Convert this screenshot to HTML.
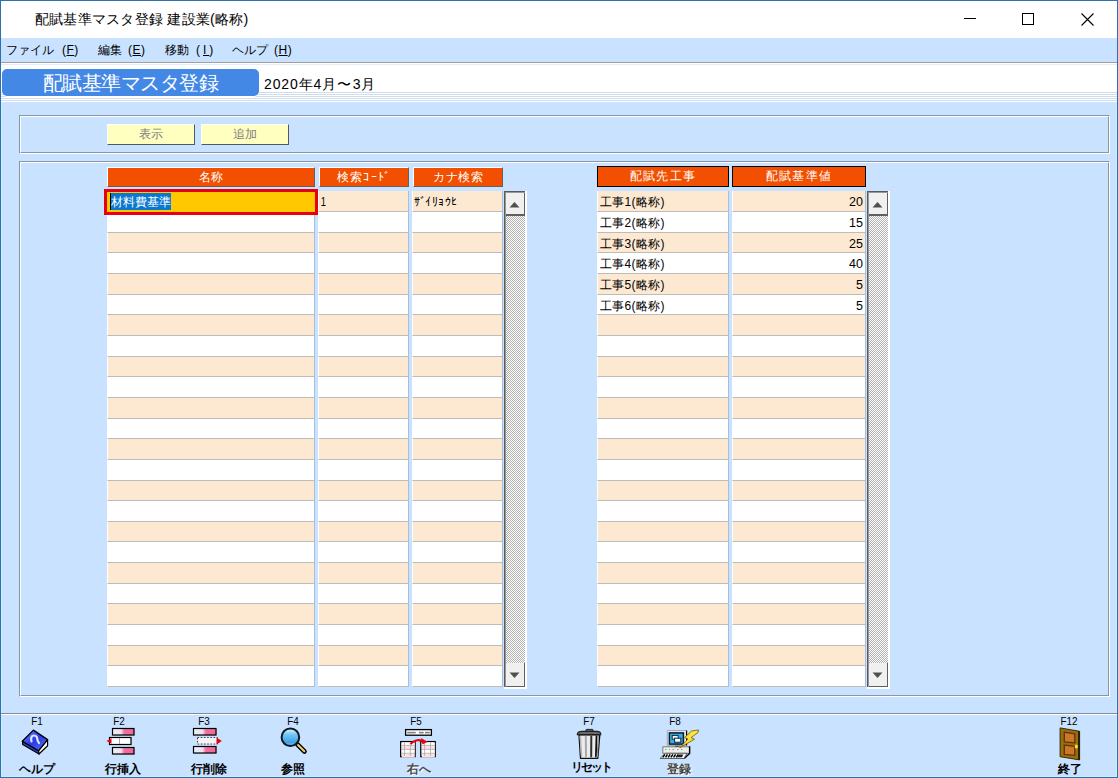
<!DOCTYPE html><html lang="ja"><head><meta charset="utf-8"><style>
*{margin:0;padding:0;box-sizing:border-box}
html,body{width:1118px;height:778px;overflow:hidden;background:#c8e2ff;font-family:"Liberation Sans",sans-serif}
div{position:absolute}
.t{white-space:nowrap;line-height:1}
</style></head><body><div style="left:0px;top:0px;width:1118px;height:778px;border:1px solid #2d6fb0;background:#c8e2ff"></div>
<div style="left:1px;top:1px;width:1116px;height:776px;border-left:1px solid #cdf0ff;border-right:1px solid #cdf0ff;border-bottom:1px solid #cdf0ff"></div>
<div style="left:1px;top:1px;width:1116px;height:37px;background:#fff"></div>
<div class="t" style="left:35px;top:12px;font-size:14.3px;color:#000;letter-spacing:0.23px">配賦基準マスタ登録 建設業(略称)</div>
<div style="left:964px;top:18px;width:12px;height:1px;background:#000"></div>
<div style="left:1022px;top:13px;width:12px;height:12px;border:1px solid #000"></div>
<svg style="position:absolute;left:1081px;top:13px" width="13" height="13"><path d="M0.5 0.5L12.5 12.5M12.5 0.5L0.5 12.5" stroke="#000" stroke-width="1.1"/></svg>
<div style="left:1px;top:38px;width:1116px;height:24px;background:#c8e2ff"></div>
<div style="left:1px;top:62px;width:1116px;height:1px;background:#a0a0a0"></div>
<div style="left:1px;top:63px;width:1116px;height:39px;background:#fff"></div>
<div style="left:1px;top:64px;width:1116px;height:1px;background:#e4ecf4"></div>
<div style="left:1px;top:92px;width:1116px;height:1px;background:#cfdceb"></div>
<div style="left:1px;top:94px;width:1116px;height:1px;background:#cfdceb"></div>
<div style="left:1px;top:96px;width:1116px;height:1px;background:#cfdceb"></div>
<div style="left:1px;top:98px;width:1116px;height:1px;background:#cfdceb"></div>
<div style="left:1px;top:100px;width:1116px;height:1px;background:#cfdceb"></div>
<div class="t" style="left:6px;top:44px;font-size:12px;color:#000">ファイル</div>
<div class="t" style="left:62px;top:44px;font-size:12px;color:#000;letter-spacing:0.5px">(<u>F</u>)</div>
<div class="t" style="left:98px;top:44px;font-size:12px;color:#000">編集</div>
<div class="t" style="left:128px;top:44px;font-size:12px;color:#000;letter-spacing:0.5px">(<u>E</u>)</div>
<div class="t" style="left:165px;top:44px;font-size:12px;color:#000">移動</div>
<div class="t" style="left:196px;top:44px;font-size:12px;color:#000;letter-spacing:3px">(<u>I</u>)</div>
<div class="t" style="left:232px;top:44px;font-size:12px;color:#000">ヘルプ</div>
<div class="t" style="left:274px;top:44px;font-size:12px;color:#000;letter-spacing:0.5px">(<u>H</u>)</div>
<div style="left:2px;top:69px;width:257px;height:27px;background:#4488e6;border-radius:5px;box-shadow:0 1px 0 #fff"></div>
<div class="t" style="left:42.5px;top:73px;font-size:20px;color:#fff;letter-spacing:-0.45px">配賦基準マスタ登録</div>
<div class="t" style="left:264px;top:77px;font-size:14px;color:#000;letter-spacing:0.85px">2020年4月<span style="display:inline-block;transform:scaleX(1.0);margin:0 0.5px">〜</span>3月</div>
<div style="left:19px;top:115px;width:1091px;height:39px;border-top:1px solid #8a96a4;border-left:1px solid #8a96a4;border-right:1px solid #fff;border-bottom:1px solid #fff"></div>
<div style="left:20px;top:116px;width:1089px;height:37px;border-top:1px solid #fff;border-left:1px solid #fff;border-right:1px solid #8a96a4;border-bottom:1px solid #8a96a4"></div>
<div style="left:19px;top:161px;width:1091px;height:536px;border-top:1px solid #8a96a4;border-left:1px solid #8a96a4;border-right:1px solid #fff;border-bottom:1px solid #fff"></div>
<div style="left:20px;top:162px;width:1089px;height:534px;border-top:1px solid #fff;border-left:1px solid #fff;border-right:1px solid #8a96a4;border-bottom:1px solid #8a96a4"></div>
<div style="left:107px;top:124px;width:88px;height:21px;background:#ffffc0;border-top:1px solid #fff;border-left:1px solid #fff;border-right:1px solid #505860;border-bottom:1px solid #505860;font-size:12px;color:#808080;text-align:center;line-height:19px">表示</div>
<div style="left:201px;top:124px;width:88px;height:21px;background:#ffffc0;border-top:1px solid #fff;border-left:1px solid #fff;border-right:1px solid #505860;border-bottom:1px solid #505860;font-size:12px;color:#808080;text-align:center;line-height:19px">追加</div>
<div style="left:107px;width:208px;top:167px;height:20px;background:#f25000;border-top:1px solid #fff;border-left:1px solid #fff;border-right:1px solid #6a6058;border-bottom:1px solid #6a6058;font-size:12px;color:#fff;text-align:center;line-height:18px;letter-spacing:0px">名称</div>
<div style="left:319px;width:90px;top:167px;height:20px;background:#f25000;border-top:1px solid #fff;border-left:1px solid #fff;border-right:1px solid #6a6058;border-bottom:1px solid #6a6058;font-size:12px;color:#fff;text-align:center;line-height:18px;letter-spacing:1.2px">検索ｺｰﾄﾞ</div>
<div style="left:413px;width:90px;top:167px;height:20px;background:#f25000;border-top:1px solid #fff;border-left:1px solid #fff;border-right:1px solid #6a6058;border-bottom:1px solid #6a6058;font-size:12px;color:#fff;text-align:center;line-height:18px;letter-spacing:0.5px">カナ検索</div>
<div style="left:597px;width:132px;top:166px;height:21px;background:#f25000;border:1px solid #000;font-size:12px;color:#fff;text-align:center;line-height:19px;letter-spacing:1.2px">配賦先工事</div>
<div style="left:732px;width:134px;top:166px;height:21px;background:#f25000;border:1px solid #000;font-size:12px;color:#fff;text-align:center;line-height:19px;letter-spacing:1.2px">配賦基準値</div>
<div style="left:314px;top:191px;width:1px;height:496px;background:#a9bfd6"></div>
<div style="left:408px;top:191px;width:1px;height:496px;background:#a9bfd6"></div>
<div style="left:502px;top:191px;width:1px;height:496px;background:#a9bfd6"></div>
<div style="left:728px;top:191px;width:1px;height:496px;background:#a9bfd6"></div>
<div style="left:865px;top:191px;width:1px;height:496px;background:#a9bfd6"></div>
<div style="left:107px;top:191px;width:207px;height:21px;background:#fde9d2;border-bottom:1px solid #bebcb8;border-left:1px solid #fff"></div>
<div style="left:318px;top:191px;width:90px;height:21px;background:#fde9d2;border-bottom:1px solid #bebcb8;border-left:1px solid #fff"></div>
<div style="left:412px;top:191px;width:90px;height:21px;background:#fde9d2;border-bottom:1px solid #bebcb8;border-left:1px solid #fff"></div>
<div style="left:597px;top:191px;width:131px;height:21px;background:#fde9d2;border-bottom:1px solid #bebcb8;border-left:1px solid #fff"></div>
<div class="t" style="left:600px;top:196px;font-size:12px;color:#000;letter-spacing:0.3px">工事1(略称)</div>
<div style="left:732px;top:191px;width:133px;height:21px;background:#fde9d2;border-bottom:1px solid #bebcb8;border-left:1px solid #fff"></div>
<div class="t" style="left:732px;width:131px;top:196px;font-size:12.5px;color:#000;text-align:right">20</div>
<div style="left:107px;top:212px;width:207px;height:21px;background:#ffffff;border-bottom:1px solid #bebcb8;border-left:1px solid #fff"></div>
<div style="left:318px;top:212px;width:90px;height:21px;background:#ffffff;border-bottom:1px solid #bebcb8;border-left:1px solid #fff"></div>
<div style="left:412px;top:212px;width:90px;height:21px;background:#ffffff;border-bottom:1px solid #bebcb8;border-left:1px solid #fff"></div>
<div style="left:597px;top:212px;width:131px;height:21px;background:#ffffff;border-bottom:1px solid #bebcb8;border-left:1px solid #fff"></div>
<div class="t" style="left:600px;top:217px;font-size:12px;color:#000;letter-spacing:0.3px">工事2(略称)</div>
<div style="left:732px;top:212px;width:133px;height:21px;background:#ffffff;border-bottom:1px solid #bebcb8;border-left:1px solid #fff"></div>
<div class="t" style="left:732px;width:131px;top:217px;font-size:12.5px;color:#000;text-align:right">15</div>
<div style="left:107px;top:233px;width:207px;height:20px;background:#fde9d2;border-bottom:1px solid #bebcb8;border-left:1px solid #fff"></div>
<div style="left:318px;top:233px;width:90px;height:20px;background:#fde9d2;border-bottom:1px solid #bebcb8;border-left:1px solid #fff"></div>
<div style="left:412px;top:233px;width:90px;height:20px;background:#fde9d2;border-bottom:1px solid #bebcb8;border-left:1px solid #fff"></div>
<div style="left:597px;top:233px;width:131px;height:20px;background:#fde9d2;border-bottom:1px solid #bebcb8;border-left:1px solid #fff"></div>
<div class="t" style="left:600px;top:238px;font-size:12px;color:#000;letter-spacing:0.3px">工事3(略称)</div>
<div style="left:732px;top:233px;width:133px;height:20px;background:#fde9d2;border-bottom:1px solid #bebcb8;border-left:1px solid #fff"></div>
<div class="t" style="left:732px;width:131px;top:238px;font-size:12.5px;color:#000;text-align:right">25</div>
<div style="left:107px;top:253px;width:207px;height:21px;background:#ffffff;border-bottom:1px solid #bebcb8;border-left:1px solid #fff"></div>
<div style="left:318px;top:253px;width:90px;height:21px;background:#ffffff;border-bottom:1px solid #bebcb8;border-left:1px solid #fff"></div>
<div style="left:412px;top:253px;width:90px;height:21px;background:#ffffff;border-bottom:1px solid #bebcb8;border-left:1px solid #fff"></div>
<div style="left:597px;top:253px;width:131px;height:21px;background:#ffffff;border-bottom:1px solid #bebcb8;border-left:1px solid #fff"></div>
<div class="t" style="left:600px;top:258px;font-size:12px;color:#000;letter-spacing:0.3px">工事4(略称)</div>
<div style="left:732px;top:253px;width:133px;height:21px;background:#ffffff;border-bottom:1px solid #bebcb8;border-left:1px solid #fff"></div>
<div class="t" style="left:732px;width:131px;top:258px;font-size:12.5px;color:#000;text-align:right">40</div>
<div style="left:107px;top:274px;width:207px;height:21px;background:#fde9d2;border-bottom:1px solid #bebcb8;border-left:1px solid #fff"></div>
<div style="left:318px;top:274px;width:90px;height:21px;background:#fde9d2;border-bottom:1px solid #bebcb8;border-left:1px solid #fff"></div>
<div style="left:412px;top:274px;width:90px;height:21px;background:#fde9d2;border-bottom:1px solid #bebcb8;border-left:1px solid #fff"></div>
<div style="left:597px;top:274px;width:131px;height:21px;background:#fde9d2;border-bottom:1px solid #bebcb8;border-left:1px solid #fff"></div>
<div class="t" style="left:600px;top:279px;font-size:12px;color:#000;letter-spacing:0.3px">工事5(略称)</div>
<div style="left:732px;top:274px;width:133px;height:21px;background:#fde9d2;border-bottom:1px solid #bebcb8;border-left:1px solid #fff"></div>
<div class="t" style="left:732px;width:131px;top:279px;font-size:12.5px;color:#000;text-align:right">5</div>
<div style="left:107px;top:295px;width:207px;height:20px;background:#ffffff;border-bottom:1px solid #bebcb8;border-left:1px solid #fff"></div>
<div style="left:318px;top:295px;width:90px;height:20px;background:#ffffff;border-bottom:1px solid #bebcb8;border-left:1px solid #fff"></div>
<div style="left:412px;top:295px;width:90px;height:20px;background:#ffffff;border-bottom:1px solid #bebcb8;border-left:1px solid #fff"></div>
<div style="left:597px;top:295px;width:131px;height:20px;background:#ffffff;border-bottom:1px solid #bebcb8;border-left:1px solid #fff"></div>
<div class="t" style="left:600px;top:300px;font-size:12px;color:#000;letter-spacing:0.3px">工事6(略称)</div>
<div style="left:732px;top:295px;width:133px;height:20px;background:#ffffff;border-bottom:1px solid #bebcb8;border-left:1px solid #fff"></div>
<div class="t" style="left:732px;width:131px;top:300px;font-size:12.5px;color:#000;text-align:right">5</div>
<div style="left:107px;top:315px;width:207px;height:21px;background:#fde9d2;border-bottom:1px solid #bebcb8;border-left:1px solid #fff"></div>
<div style="left:318px;top:315px;width:90px;height:21px;background:#fde9d2;border-bottom:1px solid #bebcb8;border-left:1px solid #fff"></div>
<div style="left:412px;top:315px;width:90px;height:21px;background:#fde9d2;border-bottom:1px solid #bebcb8;border-left:1px solid #fff"></div>
<div style="left:597px;top:315px;width:131px;height:21px;background:#fde9d2;border-bottom:1px solid #bebcb8;border-left:1px solid #fff"></div>
<div style="left:732px;top:315px;width:133px;height:21px;background:#fde9d2;border-bottom:1px solid #bebcb8;border-left:1px solid #fff"></div>
<div style="left:107px;top:336px;width:207px;height:21px;background:#ffffff;border-bottom:1px solid #bebcb8;border-left:1px solid #fff"></div>
<div style="left:318px;top:336px;width:90px;height:21px;background:#ffffff;border-bottom:1px solid #bebcb8;border-left:1px solid #fff"></div>
<div style="left:412px;top:336px;width:90px;height:21px;background:#ffffff;border-bottom:1px solid #bebcb8;border-left:1px solid #fff"></div>
<div style="left:597px;top:336px;width:131px;height:21px;background:#ffffff;border-bottom:1px solid #bebcb8;border-left:1px solid #fff"></div>
<div style="left:732px;top:336px;width:133px;height:21px;background:#ffffff;border-bottom:1px solid #bebcb8;border-left:1px solid #fff"></div>
<div style="left:107px;top:357px;width:207px;height:20px;background:#fde9d2;border-bottom:1px solid #bebcb8;border-left:1px solid #fff"></div>
<div style="left:318px;top:357px;width:90px;height:20px;background:#fde9d2;border-bottom:1px solid #bebcb8;border-left:1px solid #fff"></div>
<div style="left:412px;top:357px;width:90px;height:20px;background:#fde9d2;border-bottom:1px solid #bebcb8;border-left:1px solid #fff"></div>
<div style="left:597px;top:357px;width:131px;height:20px;background:#fde9d2;border-bottom:1px solid #bebcb8;border-left:1px solid #fff"></div>
<div style="left:732px;top:357px;width:133px;height:20px;background:#fde9d2;border-bottom:1px solid #bebcb8;border-left:1px solid #fff"></div>
<div style="left:107px;top:377px;width:207px;height:21px;background:#ffffff;border-bottom:1px solid #bebcb8;border-left:1px solid #fff"></div>
<div style="left:318px;top:377px;width:90px;height:21px;background:#ffffff;border-bottom:1px solid #bebcb8;border-left:1px solid #fff"></div>
<div style="left:412px;top:377px;width:90px;height:21px;background:#ffffff;border-bottom:1px solid #bebcb8;border-left:1px solid #fff"></div>
<div style="left:597px;top:377px;width:131px;height:21px;background:#ffffff;border-bottom:1px solid #bebcb8;border-left:1px solid #fff"></div>
<div style="left:732px;top:377px;width:133px;height:21px;background:#ffffff;border-bottom:1px solid #bebcb8;border-left:1px solid #fff"></div>
<div style="left:107px;top:398px;width:207px;height:21px;background:#fde9d2;border-bottom:1px solid #bebcb8;border-left:1px solid #fff"></div>
<div style="left:318px;top:398px;width:90px;height:21px;background:#fde9d2;border-bottom:1px solid #bebcb8;border-left:1px solid #fff"></div>
<div style="left:412px;top:398px;width:90px;height:21px;background:#fde9d2;border-bottom:1px solid #bebcb8;border-left:1px solid #fff"></div>
<div style="left:597px;top:398px;width:131px;height:21px;background:#fde9d2;border-bottom:1px solid #bebcb8;border-left:1px solid #fff"></div>
<div style="left:732px;top:398px;width:133px;height:21px;background:#fde9d2;border-bottom:1px solid #bebcb8;border-left:1px solid #fff"></div>
<div style="left:107px;top:419px;width:207px;height:20px;background:#ffffff;border-bottom:1px solid #bebcb8;border-left:1px solid #fff"></div>
<div style="left:318px;top:419px;width:90px;height:20px;background:#ffffff;border-bottom:1px solid #bebcb8;border-left:1px solid #fff"></div>
<div style="left:412px;top:419px;width:90px;height:20px;background:#ffffff;border-bottom:1px solid #bebcb8;border-left:1px solid #fff"></div>
<div style="left:597px;top:419px;width:131px;height:20px;background:#ffffff;border-bottom:1px solid #bebcb8;border-left:1px solid #fff"></div>
<div style="left:732px;top:419px;width:133px;height:20px;background:#ffffff;border-bottom:1px solid #bebcb8;border-left:1px solid #fff"></div>
<div style="left:107px;top:439px;width:207px;height:21px;background:#fde9d2;border-bottom:1px solid #bebcb8;border-left:1px solid #fff"></div>
<div style="left:318px;top:439px;width:90px;height:21px;background:#fde9d2;border-bottom:1px solid #bebcb8;border-left:1px solid #fff"></div>
<div style="left:412px;top:439px;width:90px;height:21px;background:#fde9d2;border-bottom:1px solid #bebcb8;border-left:1px solid #fff"></div>
<div style="left:597px;top:439px;width:131px;height:21px;background:#fde9d2;border-bottom:1px solid #bebcb8;border-left:1px solid #fff"></div>
<div style="left:732px;top:439px;width:133px;height:21px;background:#fde9d2;border-bottom:1px solid #bebcb8;border-left:1px solid #fff"></div>
<div style="left:107px;top:460px;width:207px;height:21px;background:#ffffff;border-bottom:1px solid #bebcb8;border-left:1px solid #fff"></div>
<div style="left:318px;top:460px;width:90px;height:21px;background:#ffffff;border-bottom:1px solid #bebcb8;border-left:1px solid #fff"></div>
<div style="left:412px;top:460px;width:90px;height:21px;background:#ffffff;border-bottom:1px solid #bebcb8;border-left:1px solid #fff"></div>
<div style="left:597px;top:460px;width:131px;height:21px;background:#ffffff;border-bottom:1px solid #bebcb8;border-left:1px solid #fff"></div>
<div style="left:732px;top:460px;width:133px;height:21px;background:#ffffff;border-bottom:1px solid #bebcb8;border-left:1px solid #fff"></div>
<div style="left:107px;top:481px;width:207px;height:20px;background:#fde9d2;border-bottom:1px solid #bebcb8;border-left:1px solid #fff"></div>
<div style="left:318px;top:481px;width:90px;height:20px;background:#fde9d2;border-bottom:1px solid #bebcb8;border-left:1px solid #fff"></div>
<div style="left:412px;top:481px;width:90px;height:20px;background:#fde9d2;border-bottom:1px solid #bebcb8;border-left:1px solid #fff"></div>
<div style="left:597px;top:481px;width:131px;height:20px;background:#fde9d2;border-bottom:1px solid #bebcb8;border-left:1px solid #fff"></div>
<div style="left:732px;top:481px;width:133px;height:20px;background:#fde9d2;border-bottom:1px solid #bebcb8;border-left:1px solid #fff"></div>
<div style="left:107px;top:501px;width:207px;height:21px;background:#ffffff;border-bottom:1px solid #bebcb8;border-left:1px solid #fff"></div>
<div style="left:318px;top:501px;width:90px;height:21px;background:#ffffff;border-bottom:1px solid #bebcb8;border-left:1px solid #fff"></div>
<div style="left:412px;top:501px;width:90px;height:21px;background:#ffffff;border-bottom:1px solid #bebcb8;border-left:1px solid #fff"></div>
<div style="left:597px;top:501px;width:131px;height:21px;background:#ffffff;border-bottom:1px solid #bebcb8;border-left:1px solid #fff"></div>
<div style="left:732px;top:501px;width:133px;height:21px;background:#ffffff;border-bottom:1px solid #bebcb8;border-left:1px solid #fff"></div>
<div style="left:107px;top:522px;width:207px;height:20px;background:#fde9d2;border-bottom:1px solid #bebcb8;border-left:1px solid #fff"></div>
<div style="left:318px;top:522px;width:90px;height:20px;background:#fde9d2;border-bottom:1px solid #bebcb8;border-left:1px solid #fff"></div>
<div style="left:412px;top:522px;width:90px;height:20px;background:#fde9d2;border-bottom:1px solid #bebcb8;border-left:1px solid #fff"></div>
<div style="left:597px;top:522px;width:131px;height:20px;background:#fde9d2;border-bottom:1px solid #bebcb8;border-left:1px solid #fff"></div>
<div style="left:732px;top:522px;width:133px;height:20px;background:#fde9d2;border-bottom:1px solid #bebcb8;border-left:1px solid #fff"></div>
<div style="left:107px;top:542px;width:207px;height:21px;background:#ffffff;border-bottom:1px solid #bebcb8;border-left:1px solid #fff"></div>
<div style="left:318px;top:542px;width:90px;height:21px;background:#ffffff;border-bottom:1px solid #bebcb8;border-left:1px solid #fff"></div>
<div style="left:412px;top:542px;width:90px;height:21px;background:#ffffff;border-bottom:1px solid #bebcb8;border-left:1px solid #fff"></div>
<div style="left:597px;top:542px;width:131px;height:21px;background:#ffffff;border-bottom:1px solid #bebcb8;border-left:1px solid #fff"></div>
<div style="left:732px;top:542px;width:133px;height:21px;background:#ffffff;border-bottom:1px solid #bebcb8;border-left:1px solid #fff"></div>
<div style="left:107px;top:563px;width:207px;height:21px;background:#fde9d2;border-bottom:1px solid #bebcb8;border-left:1px solid #fff"></div>
<div style="left:318px;top:563px;width:90px;height:21px;background:#fde9d2;border-bottom:1px solid #bebcb8;border-left:1px solid #fff"></div>
<div style="left:412px;top:563px;width:90px;height:21px;background:#fde9d2;border-bottom:1px solid #bebcb8;border-left:1px solid #fff"></div>
<div style="left:597px;top:563px;width:131px;height:21px;background:#fde9d2;border-bottom:1px solid #bebcb8;border-left:1px solid #fff"></div>
<div style="left:732px;top:563px;width:133px;height:21px;background:#fde9d2;border-bottom:1px solid #bebcb8;border-left:1px solid #fff"></div>
<div style="left:107px;top:584px;width:207px;height:20px;background:#ffffff;border-bottom:1px solid #bebcb8;border-left:1px solid #fff"></div>
<div style="left:318px;top:584px;width:90px;height:20px;background:#ffffff;border-bottom:1px solid #bebcb8;border-left:1px solid #fff"></div>
<div style="left:412px;top:584px;width:90px;height:20px;background:#ffffff;border-bottom:1px solid #bebcb8;border-left:1px solid #fff"></div>
<div style="left:597px;top:584px;width:131px;height:20px;background:#ffffff;border-bottom:1px solid #bebcb8;border-left:1px solid #fff"></div>
<div style="left:732px;top:584px;width:133px;height:20px;background:#ffffff;border-bottom:1px solid #bebcb8;border-left:1px solid #fff"></div>
<div style="left:107px;top:604px;width:207px;height:21px;background:#fde9d2;border-bottom:1px solid #bebcb8;border-left:1px solid #fff"></div>
<div style="left:318px;top:604px;width:90px;height:21px;background:#fde9d2;border-bottom:1px solid #bebcb8;border-left:1px solid #fff"></div>
<div style="left:412px;top:604px;width:90px;height:21px;background:#fde9d2;border-bottom:1px solid #bebcb8;border-left:1px solid #fff"></div>
<div style="left:597px;top:604px;width:131px;height:21px;background:#fde9d2;border-bottom:1px solid #bebcb8;border-left:1px solid #fff"></div>
<div style="left:732px;top:604px;width:133px;height:21px;background:#fde9d2;border-bottom:1px solid #bebcb8;border-left:1px solid #fff"></div>
<div style="left:107px;top:625px;width:207px;height:21px;background:#ffffff;border-bottom:1px solid #bebcb8;border-left:1px solid #fff"></div>
<div style="left:318px;top:625px;width:90px;height:21px;background:#ffffff;border-bottom:1px solid #bebcb8;border-left:1px solid #fff"></div>
<div style="left:412px;top:625px;width:90px;height:21px;background:#ffffff;border-bottom:1px solid #bebcb8;border-left:1px solid #fff"></div>
<div style="left:597px;top:625px;width:131px;height:21px;background:#ffffff;border-bottom:1px solid #bebcb8;border-left:1px solid #fff"></div>
<div style="left:732px;top:625px;width:133px;height:21px;background:#ffffff;border-bottom:1px solid #bebcb8;border-left:1px solid #fff"></div>
<div style="left:107px;top:646px;width:207px;height:20px;background:#fde9d2;border-bottom:1px solid #bebcb8;border-left:1px solid #fff"></div>
<div style="left:318px;top:646px;width:90px;height:20px;background:#fde9d2;border-bottom:1px solid #bebcb8;border-left:1px solid #fff"></div>
<div style="left:412px;top:646px;width:90px;height:20px;background:#fde9d2;border-bottom:1px solid #bebcb8;border-left:1px solid #fff"></div>
<div style="left:597px;top:646px;width:131px;height:20px;background:#fde9d2;border-bottom:1px solid #bebcb8;border-left:1px solid #fff"></div>
<div style="left:732px;top:646px;width:133px;height:20px;background:#fde9d2;border-bottom:1px solid #bebcb8;border-left:1px solid #fff"></div>
<div style="left:107px;top:666px;width:207px;height:21px;background:#ffffff;border-bottom:1px solid #bebcb8;border-left:1px solid #fff"></div>
<div style="left:318px;top:666px;width:90px;height:21px;background:#ffffff;border-bottom:1px solid #bebcb8;border-left:1px solid #fff"></div>
<div style="left:412px;top:666px;width:90px;height:21px;background:#ffffff;border-bottom:1px solid #bebcb8;border-left:1px solid #fff"></div>
<div style="left:597px;top:666px;width:131px;height:21px;background:#ffffff;border-bottom:1px solid #bebcb8;border-left:1px solid #fff"></div>
<div style="left:732px;top:666px;width:133px;height:21px;background:#ffffff;border-bottom:1px solid #bebcb8;border-left:1px solid #fff"></div>
<div class="t" style="left:320px;top:196px;font-size:12.5px;color:#000"><span style="display:inline-block;transform:scaleX(0.75)">1</span></div>
<div class="t" style="left:414px;top:196px;font-size:12px;color:#000"><span style="display:inline-block;width:6px">ｻ</span><span style="display:inline-block;width:5px">ﾞ</span><span style="display:inline-block;width:6.5px">ｲ</span><span style="display:inline-block;width:6.5px">ﾘ</span><span style="display:inline-block;width:6.5px">ｮ</span><span style="display:inline-block;width:6px">ｳ</span><span style="display:inline-block;width:6px">ﾋ</span></div>
<div style="left:104px;top:189px;width:214px;height:26px;border:3px solid #e8000c;background:#ffc800"></div>
<div style="left:111px;top:193px;width:60px;height:17px;background:#0a78d0"></div>
<div style="left:110px;top:193px;width:1px;height:17px;background:#000"></div>
<div class="t" style="left:111px;top:196px;font-size:12px;color:#fff">材料費基準</div>
<div style="left:504px;top:191px;width:23px;height:498px;background:#fff"></div>
<div style="left:504px;top:191px;width:21px;height:496px;border-top:1px solid #5a5a5a;border-left:1px solid #5a5a5a;box-shadow:inset 1px 1px 0 #989898;background:repeating-conic-gradient(#b0b0b0 0 25%,#ffffff 0 50%) 0 0/2px 2px"></div>
<div style="left:506px;top:193px;width:19px;height:23px;background:#f0f0f0;border-right:1px solid #5f5f5f;border-bottom:2px solid #5f5f5f"></div>
<svg style="position:absolute;left:509px;top:202px" width="11" height="6"><path d="M5.5 0L10.5 5.5H0.5Z" fill="#505050"/></svg>
<div style="left:506px;top:663px;width:19px;height:24px;background:#f0f0f0;border-right:1px solid #5f5f5f;border-bottom:1px solid #5f5f5f"></div>
<svg style="position:absolute;left:509px;top:672px" width="11" height="6"><path d="M0.5 0.5H10.5L5.5 6Z" fill="#505050"/></svg>
<div style="left:867px;top:191px;width:23px;height:498px;background:#fff"></div>
<div style="left:867px;top:191px;width:21px;height:496px;border-top:1px solid #5a5a5a;border-left:1px solid #5a5a5a;box-shadow:inset 1px 1px 0 #989898;background:repeating-conic-gradient(#b0b0b0 0 25%,#ffffff 0 50%) 0 0/2px 2px"></div>
<div style="left:869px;top:193px;width:19px;height:23px;background:#f0f0f0;border-right:1px solid #5f5f5f;border-bottom:2px solid #5f5f5f"></div>
<svg style="position:absolute;left:872px;top:202px" width="11" height="6"><path d="M5.5 0L10.5 5.5H0.5Z" fill="#505050"/></svg>
<div style="left:869px;top:663px;width:19px;height:24px;background:#f0f0f0;border-right:1px solid #5f5f5f;border-bottom:1px solid #5f5f5f"></div>
<svg style="position:absolute;left:872px;top:672px" width="11" height="6"><path d="M0.5 0.5H10.5L5.5 6Z" fill="#505050"/></svg>
<div style="left:1px;top:713px;width:1116px;height:1px;background:#7f8c99"></div>
<div style="left:1px;top:714px;width:1116px;height:1px;background:#fff"></div>
<div class="t" style="left:7px;width:60px;top:716px;font-size:11px;color:#000;text-align:center;transform:scaleX(0.9)">F1</div>
<div class="t" style="left:89px;width:60px;top:716px;font-size:11px;color:#000;text-align:center;transform:scaleX(0.9)">F2</div>
<div class="t" style="left:174px;width:60px;top:716px;font-size:11px;color:#000;text-align:center;transform:scaleX(0.9)">F3</div>
<div class="t" style="left:263px;width:60px;top:716px;font-size:11px;color:#000;text-align:center;transform:scaleX(0.9)">F4</div>
<div class="t" style="left:386px;width:60px;top:716px;font-size:11px;color:#000;text-align:center;transform:scaleX(0.9)">F5</div>
<div class="t" style="left:559px;width:60px;top:716px;font-size:11px;color:#000;text-align:center;transform:scaleX(0.9)">F7</div>
<div class="t" style="left:645px;width:60px;top:716px;font-size:11px;color:#000;text-align:center;transform:scaleX(0.9)">F8</div>
<div class="t" style="left:1039px;width:60px;top:716px;font-size:11px;color:#000;text-align:center;transform:scaleX(0.9)">F12</div>
<div class="t" style="left:-3px;width:80px;top:763px;font-size:12px;font-weight:bold;color:#000;text-align:center;letter-spacing:0px">ヘルプ</div>
<div class="t" style="left:83px;width:80px;top:763px;font-size:12px;font-weight:bold;color:#000;text-align:center;letter-spacing:0px">行挿入</div>
<div class="t" style="left:169px;width:80px;top:763px;font-size:12px;font-weight:bold;color:#000;text-align:center;letter-spacing:0px">行削除</div>
<div class="t" style="left:252.5px;width:80px;top:763px;font-size:12px;font-weight:bold;color:#000;text-align:center;letter-spacing:0px">参照</div>
<div class="t" style="left:379px;width:80px;top:763px;font-size:12px;font-weight:bold;color:#484848;text-shadow:1px 1px 0 #fff;text-align:center;letter-spacing:0px">右へ</div>
<div class="t" style="left:551px;width:80px;top:761px;font-size:12px;font-weight:bold;color:#000;text-align:center;letter-spacing:-1.8px">リセット</div>
<div class="t" style="left:638.5px;width:80px;top:763px;font-size:12px;font-weight:bold;color:#484848;text-shadow:1px 1px 0 #fff;text-align:center;letter-spacing:0px">登録</div>
<div class="t" style="left:1030px;width:80px;top:763px;font-size:12px;font-weight:bold;color:#000;text-align:center;letter-spacing:0px">終了</div>
<svg style="position:absolute;left:18px;top:726px" width="34" height="32" viewBox="0 0 34 32">
<defs><linearGradient id="bk" x1="0" y1="0" x2="1" y2="1"><stop offset="0" stop-color="#6a8cff"/><stop offset="0.5" stop-color="#2a3ae8"/><stop offset="1" stop-color="#5a7af0"/></linearGradient></defs>
<path d="M4.5 15.2L20.6 24.7L21 28L4.7 18.5Z" fill="#3040c8" stroke="#000" stroke-width="1.2" stroke-linejoin="round"/>
<path d="M20.6 24.7L29.6 13.6L29.6 19.8L21 28Z" fill="#fff" stroke="#000" stroke-width="1.2" stroke-linejoin="round"/>
<path d="M15.4 4.1L29.6 13.6L20.6 24.7L4.3 15.2Z" fill="url(#bk)" stroke="#000" stroke-width="1.3" stroke-linejoin="round"/>
<path d="M13.5 15.5C12.5 12 13.5 9.5 16 9.5C18.5 9.5 19.5 12 19.5 14.5L21 17" fill="none" stroke="#dfe6ff" stroke-width="2.2" stroke-linecap="round"/>
</svg><svg style="position:absolute;left:102px;top:726px" width="36" height="32" viewBox="0 0 36 32">
<defs><linearGradient id="pk" x1="0" x2="1"><stop offset="0" stop-color="#e8f0fa"/><stop offset="0.4" stop-color="#f0e0f0"/><stop offset="0.55" stop-color="#f070a0"/><stop offset="1" stop-color="#f06898"/></linearGradient>
<linearGradient id="wh" x1="0" x2="1"><stop offset="0" stop-color="#fff"/><stop offset="1" stop-color="#fff"/></linearGradient></defs>
<rect x="11" y="3" width="21.5" height="6.5" fill="#8a8a8a" opacity="0.6"/><rect x="10.5" y="2.5" width="21.5" height="6.5" fill="url(#pk)" stroke="#000" stroke-width="1.2"/><rect x="8" y="12" width="21.5" height="7" fill="#8a8a8a" opacity="0.6"/><rect x="7.5" y="11.5" width="21.5" height="7" fill="url(#wh)" stroke="#000" stroke-width="1.2"/><line x1="17.5" y1="12" x2="17.5" y2="18" stroke="#909090" stroke-width="0.8"/><path d="M4.5 15L9.5 12.2V17.8Z" fill="#f00010"/><rect x="11" y="22" width="21.5" height="6.5" fill="#8a8a8a" opacity="0.6"/><rect x="10.5" y="21.5" width="21.5" height="6.5" fill="url(#pk)" stroke="#000" stroke-width="1.2"/></svg><svg style="position:absolute;left:186px;top:726px" width="36" height="32" viewBox="0 0 36 32">
<defs><linearGradient id="pk2" x1="0" x2="1"><stop offset="0" stop-color="#e8f0fa"/><stop offset="0.4" stop-color="#f0e0f0"/><stop offset="0.55" stop-color="#f070a0"/><stop offset="1" stop-color="#f06898"/></linearGradient></defs>
<rect x="8" y="3" width="22.5" height="6.5" fill="#8a8a8a" opacity="0.6"/><rect x="7.5" y="2.5" width="22.5" height="6.5" fill="url(#pk2)" stroke="#000" stroke-width="1.2"/>
<rect x="11.5" y="11.5" width="20" height="6.5" fill="#f4f4f4" stroke="#404040" stroke-width="1" stroke-dasharray="1.6 1.6"/>
<path d="M30.5 11.5L35.8 15L30.5 18.5Z" fill="#e00010"/>
<rect x="8" y="21" width="22.5" height="6.5" fill="#8a8a8a" opacity="0.6"/><rect x="7.5" y="20.5" width="22.5" height="6.5" fill="url(#pk2)" stroke="#000" stroke-width="1.2"/></svg><svg style="position:absolute;left:276px;top:726px" width="36" height="32" viewBox="0 0 36 32">
<defs><linearGradient id="gl" x1="0" y1="0" x2="0" y2="1"><stop offset="0" stop-color="#e8f8ff"/><stop offset="0.35" stop-color="#70c8f4"/><stop offset="0.8" stop-color="#40a0e8"/><stop offset="1" stop-color="#80d0f8"/></linearGradient></defs>
<line x1="21.5" y1="18.5" x2="28.5" y2="25.5" stroke="#000" stroke-width="4.6" stroke-linecap="round"/>
<line x1="22" y1="19" x2="28.3" y2="25.3" stroke="#f0d070" stroke-width="2" stroke-linecap="round"/>
<circle cx="14.4" cy="11.2" r="8.8" fill="url(#gl)" stroke="#101820" stroke-width="2"/>
</svg><svg style="position:absolute;left:396px;top:726px" width="44" height="34" viewBox="0 0 44 34">
<rect x="9.6" y="3.6" width="25.8" height="5.6" fill="#fff" stroke="#000" stroke-width="1.3"/>
<line x1="11.2" y1="6.6" x2="19.7" y2="6.6" stroke="#808080" stroke-width="1.6"/>
<line x1="22.9" y1="6.6" x2="27.7" y2="6.6" stroke="#808080" stroke-width="1.6"/>
<line x1="29" y1="6.6" x2="33.8" y2="6.6" stroke="#808080" stroke-width="1.6"/>
<rect x="4.699999999999999" y="15.6" width="14.4" height="15" fill="#fff" stroke="#000" stroke-width="1.3"/><rect x="5.699999999999999" y="16.5" width="13" height="3.4" fill="#fff"/><rect x="5.699999999999999" y="20" width="13" height="3.4" fill="#fbe0e4"/><rect x="5.699999999999999" y="24" width="13" height="3.4" fill="#fff"/><rect x="5.699999999999999" y="28" width="13" height="3.4" fill="#fbe0e4"/><line x1="8.5" y1="16.5" x2="8.5" y2="30" stroke="#b0a8a8" stroke-width="0.8"/><line x1="14.4" y1="16.5" x2="14.4" y2="30" stroke="#b0a8a8" stroke-width="0.8"/><line x1="5.6" y1="19.4" x2="18.6" y2="19.4" stroke="#b0a8a8" stroke-width="0.8"/><line x1="5.6" y1="23.4" x2="18.6" y2="23.4" stroke="#b0a8a8" stroke-width="0.8"/><line x1="5.6" y1="27.3" x2="18.6" y2="27.3" stroke="#b0a8a8" stroke-width="0.8"/><rect x="24.8" y="15.6" width="14.4" height="15" fill="#fff" stroke="#000" stroke-width="1.3"/><rect x="25.8" y="16.5" width="13" height="3.4" fill="#fff"/><rect x="25.8" y="20" width="13" height="3.4" fill="#fbe0e4"/><rect x="25.8" y="24" width="13" height="3.4" fill="#fff"/><rect x="25.8" y="28" width="13" height="3.4" fill="#fbe0e4"/><line x1="28.6" y1="16.5" x2="28.6" y2="30" stroke="#b0a8a8" stroke-width="0.8"/><line x1="34.5" y1="16.5" x2="34.5" y2="30" stroke="#b0a8a8" stroke-width="0.8"/><line x1="25.7" y1="19.4" x2="38.7" y2="19.4" stroke="#b0a8a8" stroke-width="0.8"/><line x1="25.7" y1="23.4" x2="38.7" y2="23.4" stroke="#b0a8a8" stroke-width="0.8"/><line x1="25.7" y1="27.3" x2="38.7" y2="27.3" stroke="#b0a8a8" stroke-width="0.8"/>
<path d="M14.6 18C17.5 14.2 22.5 13.4 26.5 15" fill="none" stroke="#e80010" stroke-width="2.2"/>
<path d="M25 12L31.5 15.8L26.5 18.6Z" fill="#e80010"/>
</svg><svg style="position:absolute;left:572px;top:726px" width="34" height="34" viewBox="0 0 34 34">
<path d="M7 8.8L27.8 8.8L25.8 32.3L8.5 32.3Z" fill="#ececec" stroke="#101010" stroke-width="1.3" stroke-linejoin="round"/>
<path d="M8.3 10L9.6 31" stroke="#b8b8b8" stroke-width="1.6"/>
<path d="M13.8 10.5L14 30.5" stroke="#a8a8a8" stroke-width="2" stroke-linecap="round"/>
<path d="M19.3 10.5L19.2 30.5" stroke="#303030" stroke-width="2" stroke-linecap="round"/>
<path d="M24.5 10.5L23.9 30.5" stroke="#101010" stroke-width="1.8" stroke-linecap="round"/>
<path d="M26.3 10L25.3 31" stroke="#909090" stroke-width="1.2"/>
<path d="M13.5 5.6L14.3 3.4H20.7L21.5 5.6Z" fill="#686868" stroke="#202020" stroke-width="1"/>
<path d="M5.3 8.6C5.3 6.3 7.5 5.4 10 5.4H25C27.5 5.4 28.8 6.5 28.8 8.6Z" fill="#6a6a6a" stroke="#202020" stroke-width="1.1"/>
</svg><svg style="position:absolute;left:656px;top:726px" width="46" height="36" viewBox="0 0 46 36">
<defs><linearGradient id="bolt" x1="0" y1="0" x2="1" y2="1"><stop offset="0" stop-color="#c89000"/><stop offset="0.45" stop-color="#ffe840"/><stop offset="1" stop-color="#e0a800"/></linearGradient></defs>
<path d="M11.3 4.5H30.5V19.6H11.3Z" fill="#e6e6ee" stroke="#a8a8b4" stroke-width="1"/>
<path d="M30.6 4.5V19.6" stroke="#000" stroke-width="1.1"/>
<rect x="13.4" y="6.9" width="14" height="11.2" fill="#38b0dc" stroke="#0a1c30" stroke-width="1.5"/>
<rect x="16.2" y="9.4" width="6" height="3.8" fill="#f8f8ff" stroke="#0a2850" stroke-width="1"/>
<rect x="18.6" y="12.2" width="6.2" height="4" fill="#fff" stroke="#0a2850" stroke-width="1"/>
<path d="M19 19.8H23.5V20.8H19Z" fill="#101010"/>
<path d="M6.8 20.8H33.6V27.3H6.8Z" fill="#eeeeee" stroke="#606060" stroke-width="0.8"/>
<path d="M9 23.6H10.5M13 23.6H14M16.5 23.6H18M21 23.6H22.5M25 23.6H26.5" stroke="#70a070" stroke-width="1"/>
<path d="M33.6 20.3V27.5L28.2 32.6" fill="none" stroke="#000" stroke-width="1.4"/>
<path d="M9.5 27.3H31L28 32.5H4Z" fill="#f4f4f4" stroke="#404040" stroke-width="0.8"/>
<path d="M6.8 31.3L8.8 28.3M9.5 31.3L11.5 28.3M12.2 31.3L14.2 28.3M14.9 31.3L16.9 28.3M17.6 31.3L19.6 28.3M20.3 31.3L22.3 28.3" stroke="#000" stroke-width="1.5"/>
<path d="M22.5 28.6H27.3L26 31.3H21.2Z" fill="#202020"/>
<path d="M42.5 4L35.5 5L28.5 11.5L32 13L23.8 21.8L38.5 13.2L35 11.6L42 6.5Z" fill="url(#bolt)" stroke="#7a5a00" stroke-width="0.8" stroke-linejoin="round"/>
</svg><svg style="position:absolute;left:1054px;top:724px" width="32" height="38" viewBox="0 0 32 38">
<path d="M6.1 3.9L25.6 7.3V35.9L6.1 32.7Z" fill="#947010" stroke="#3a2a00" stroke-width="1"/>
<path d="M24 7.1V35.6L25.8 35.9V7.3Z" fill="#2a1e00"/>
<path d="M10.3 8.2L20.8 9.8V18.8L10.3 17.8Z" fill="#c87828" stroke="#6a3008" stroke-width="1.3"/>
<path d="M10.3 21.2L20.8 22.3V31.4L10.3 30.3Z" fill="#c87828" stroke="#6a3008" stroke-width="1.3"/>
<ellipse cx="22.3" cy="22.6" rx="1.5" ry="2.1" fill="#ffe030"/>
</svg></body></html>
